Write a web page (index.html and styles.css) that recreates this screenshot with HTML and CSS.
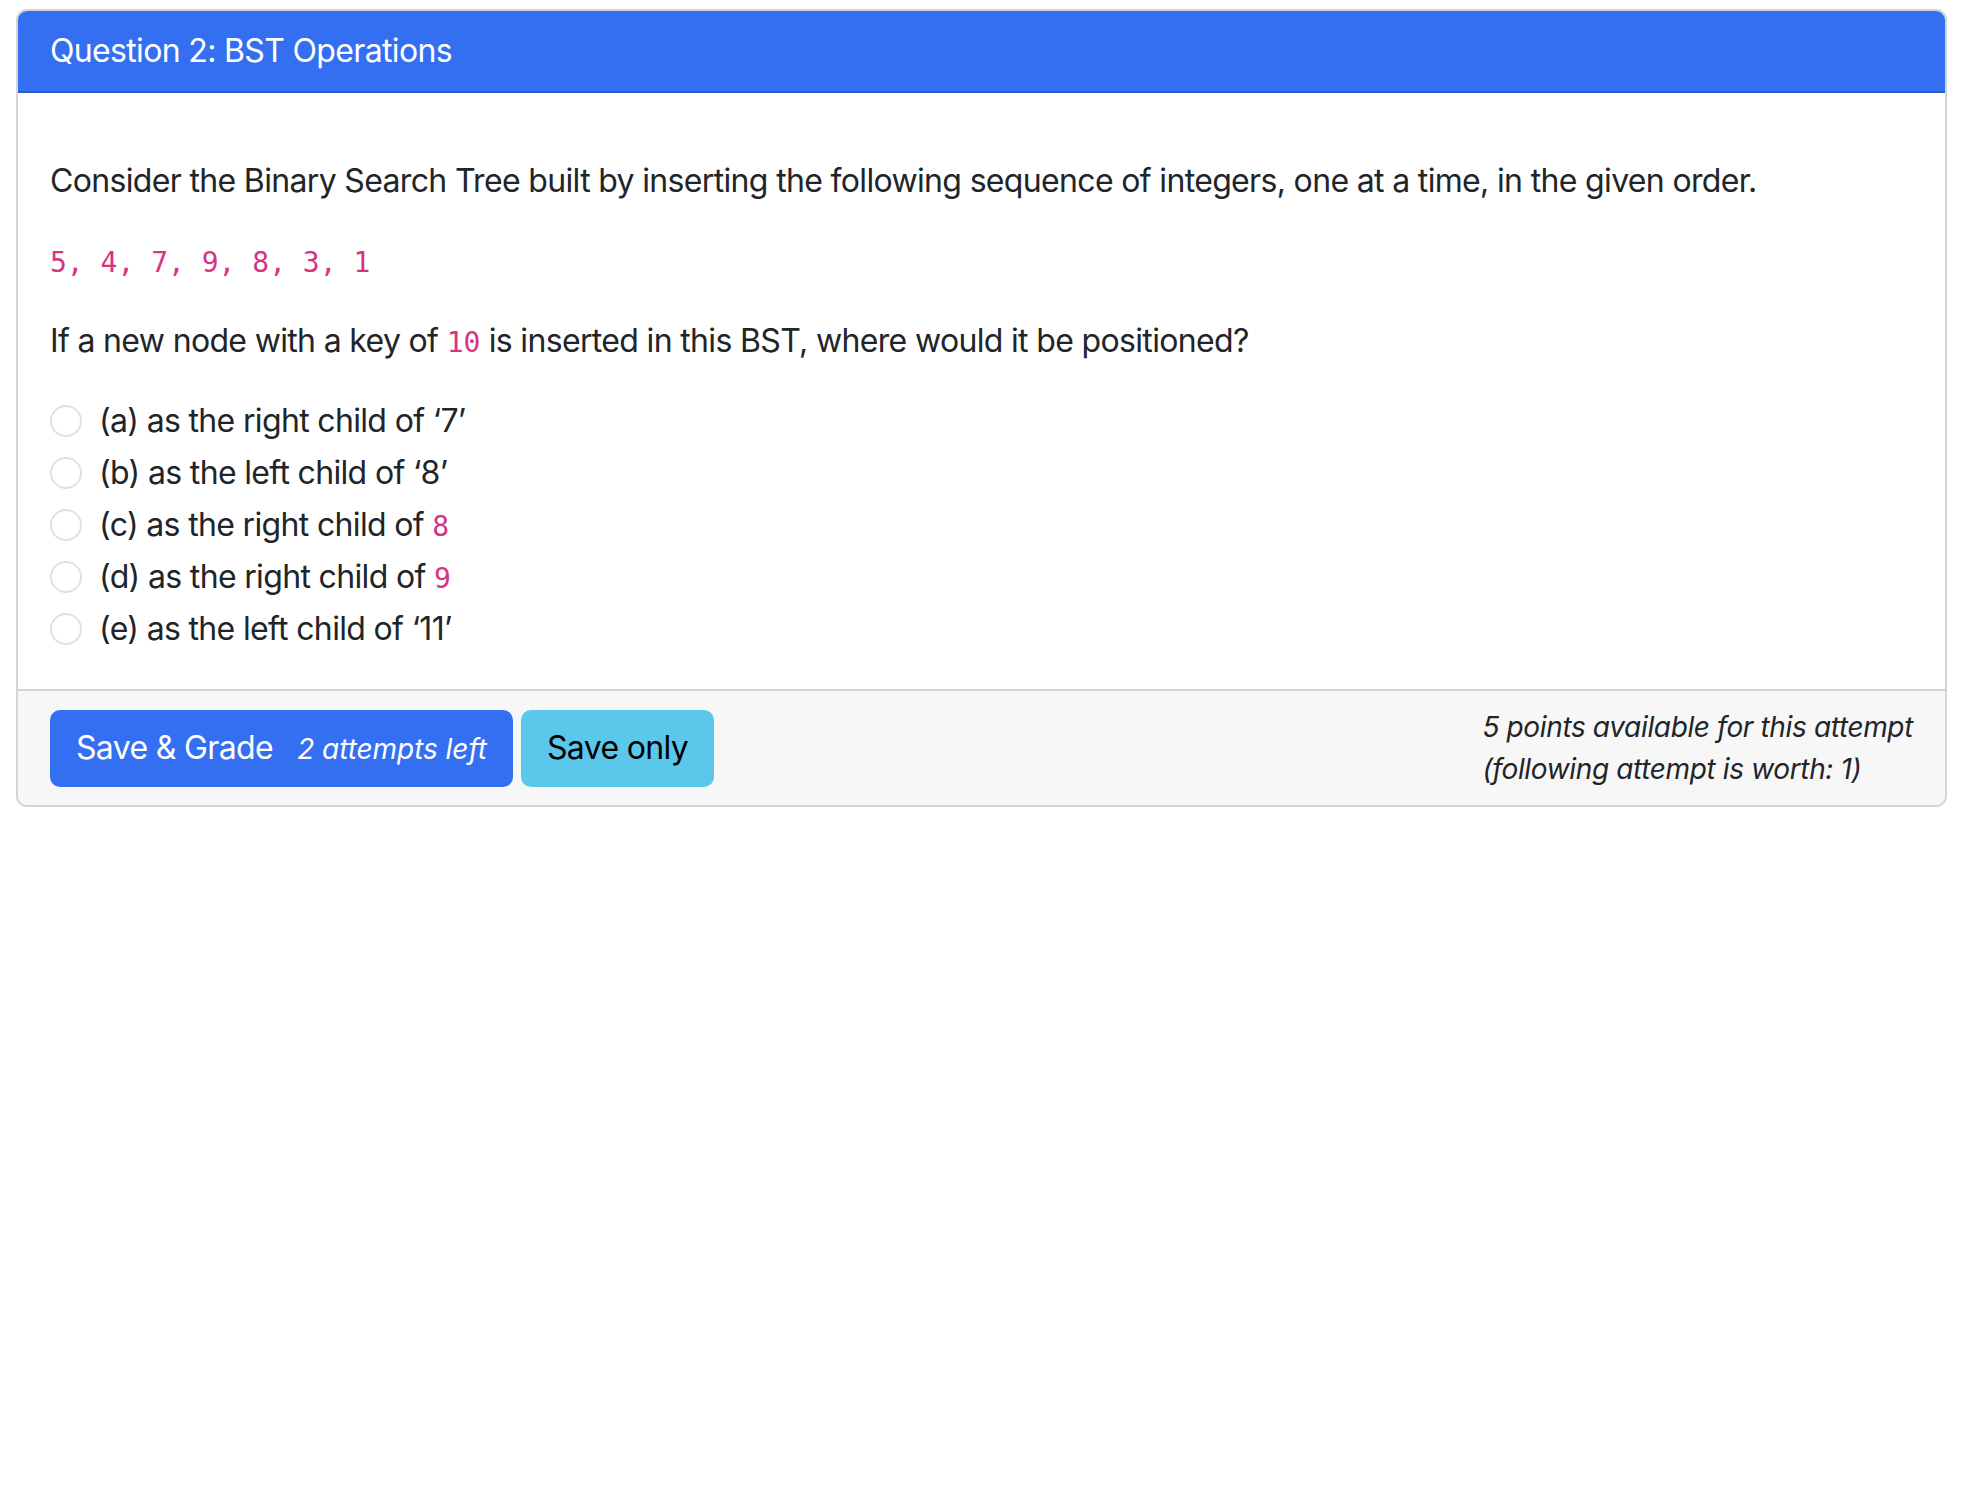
FILE: index.html
```html
<!DOCTYPE html>
<html lang="en">
<head>
<meta charset="utf-8">
<title>Question 2: BST Operations</title>
<link rel="stylesheet" href="styles.css">
</head>
<body>
<div class="card">
  <div class="card-header">Question 2: BST Operations</div>
  <div class="card-body">
    <div class="question">
      <p class="para">Consider the Binary Search Tree built by inserting the following sequence of integers, one at a time, in the given order.</p>
      <p class="para"><code class="code">5, 4, 7, 9, 8, 3, 1</code></p>
      <p class="para">If a new node with a key of <code class="code">10</code> is inserted in this BST, where would it be positioned?</p>
      <div class="options">
        <label class="form-check"><span class="radio"></span><span class="label-text">(a) as the right child of ‘7’</span></label>
        <label class="form-check"><span class="radio"></span><span class="label-text">(b) as the left child of ‘8’</span></label>
        <label class="form-check"><span class="radio"></span><span class="label-text">(c) as the right child of <code class="code">8</code></span></label>
        <label class="form-check"><span class="radio"></span><span class="label-text">(d) as the right child of <code class="code">9</code></span></label>
        <label class="form-check"><span class="radio"></span><span class="label-text">(e) as the left child of ‘11’</span></label>
      </div>
    </div>
  </div>
  <div class="card-footer">
    <div class="buttons">
      <button class="btn btn-primary">Save &amp; Grade <small class="attempts">2 attempts left</small></button>
      <button class="btn btn-info">Save only</button>
    </div>
    <div class="points">
      <div>5 points available for this attempt</div>
      <div>(following attempt is worth: 1)</div>
    </div>
  </div>
</div>
</body>
</html>
```

FILE: styles.css
```css
html, body {
  background: #ffffff;
}
body {
  margin: 9px 25px 0 16px;
  font-family: Inter, "Noto Sans", sans-serif;
  font-size: 32px;
  line-height: 1.5;
  letter-spacing: -0.66px;
  color: #212529;
}
.card {
  border: 2px solid #d4d4d4;
  border-radius: 11px;
  overflow: hidden;
  background: #fff;
}
.card-header {
  background: #346ff2;
  color: #ffffff;
  padding: 16px 32px;
  border-bottom: 2px solid #2a5ccc;
  line-height: 48px;
}
.card-body {
  padding: 32px;
}
.question {
  padding-top: 32px;
}
.para {
  margin: 0 0 32px 0;
  line-height: 48px;
}
.code {
  font-family: "DejaVu Sans Mono", "Liberation Mono", monospace;
  font-size: 28px;
  line-height: 1;
  letter-spacing: 0;
  color: #d63384;
}
.options {
  display: flex;
  flex-direction: column;
}
.form-check {
  display: flex;
  align-items: flex-start;
  height: 48px;
  margin-bottom: 4px;
}
.radio {
  flex: none;
  width: 28px;
  height: 28px;
  margin-top: 8px;
  margin-right: 17px;
  border: 2px solid #dee2e6;
  border-radius: 50%;
  background: #fff;
}
.label-text {
  line-height: 48px;
}
.card-footer {
  background: #f7f7f7;
  border-top: 2px solid #d4d4d4;
  padding: 15px 32px;
  display: flex;
  align-items: center;
  justify-content: space-between;
}
.buttons {
  display: flex;
  gap: 8px;
}
.btn {
  font-family: inherit;
  font-size: 32px;
  line-height: 48px;
  letter-spacing: -0.66px;
  padding: 12px 24px;
  border: 2px solid transparent;
  border-radius: 10px;
  cursor: pointer;
}
.btn-primary {
  background: #346ff2;
  border-color: #346ff2;
  color: #ffffff;
}
.attempts {
  font-size: 28px;
  font-style: italic;
  letter-spacing: -0.05px;
  margin-left: 16px;
}
.btn-info {
  background: #5bc8eb;
  border-color: #5bc8eb;
  color: #000000;
}
.points {
  font-size: 28px;
  font-style: italic;
  letter-spacing: -0.36px;
  line-height: 42px;
}
```
